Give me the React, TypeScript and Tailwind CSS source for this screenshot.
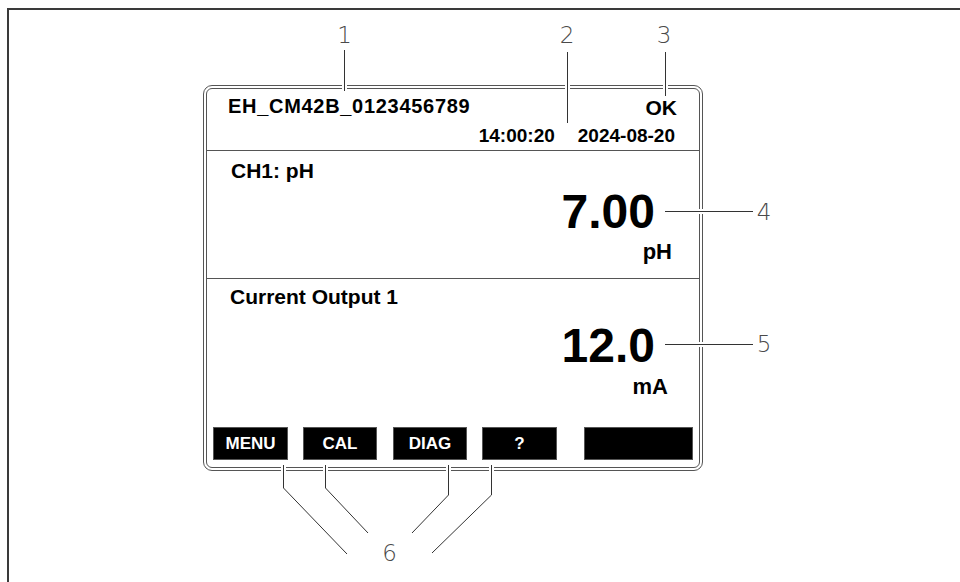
const labelFont = "font-['DejaVu_Sans',sans-serif] font-extralight text-[23px] leading-none text-[#4a4a4a]";

function Callout({ n, x, y }: { n: string; x: number; y: number }) {
  return (
    <div className={`absolute w-[24px] text-center ${labelFont}`} style={{ left: x - 12, top: y }}>
      {n}
    </div>
  );
}

function SoftKey({ label, w, ml }: { label: string; w: string; ml: string }) {
  return (
    <div className={`${w} ${ml} h-[33px] bg-black border border-[#555] flex items-center justify-center text-white font-bold text-[17px] leading-none`}>
      {label}
    </div>
  );
}

export default function App() {
  // callout leader lines: white halo first so the panel border gets a gap
  const lines = [
    'M344.5 50 V91',
    'M567.5 52 V123',
    'M665.5 52 V96',
    'M665 211.5 H753',
    'M665 344.5 H753',
    'M283.5 465 V488 L347 554',
    'M325.5 465 V488 L368 533',
    'M448.5 465 V495 L412 533',
    'M491.5 465 V495 L432 553',
  ];

  return (
    <div className="relative w-[960px] h-[582px] bg-white overflow-hidden pt-[8px] pl-[7px] font-['Liberation_Sans',Arial,sans-serif] text-black">
      <div className="h-[600px] w-[960px] border-l-2 border-t-2 border-[#3a3a3a] pl-[194px] pt-[75px]">
        <div className="w-[500px] rounded-[9px] border border-[#555] p-[2px]">
          <div className="h-[380px] rounded-[6px] border border-[#555] flex flex-col">
            {/* header */}
            <div className="h-[62px] border-b border-[#555] flex flex-col">
              <div className="flex justify-between pt-[7px] pl-[21px] pr-[22px]">
                <span className="text-[20px] leading-none font-bold tracking-[0.7px]">EH_CM42B_0123456789</span>
                <span className="mt-[1px] text-[21px] leading-none font-bold font-['Liberation_Sans_Narrow','Liberation_Sans',sans-serif]">OK</span>
              </div>
              <div className="flex justify-end gap-[23px] mt-[8px] pr-[24px] text-[19px] leading-none font-bold">
                <span>14:00:20</span>
                <span>2024-08-20</span>
              </div>
            </div>

            {/* channel 1 */}
            <div className="h-[128px] border-b border-[#555] flex flex-col">
              <div className="pt-[9px] pl-[24px] text-[21px] leading-none font-bold">CH1: pH</div>
              <div className="mt-[7px] pr-[44px] text-right text-[48px] leading-none font-bold">7.00</div>
              <div className="mt-[5px] pr-[27px] text-right text-[22px] leading-none font-bold">pH</div>
            </div>

            {/* current output */}
            <div className="flex-1 flex flex-col">
              <div className="pt-[7px] pl-[23px] text-[21px] leading-none font-bold">Current Output 1</div>
              <div className="mt-[15px] pr-[44px] text-right text-[48px] leading-none font-bold">12.0</div>
              <div className="mt-[6px] pr-[31px] text-right text-[22px] leading-none font-bold">mA</div>
              <div className="mt-[29px] pl-[6px] flex">
                <SoftKey label="MENU" w="w-[75px]" ml="ml-0" />
                <SoftKey label="CAL" w="w-[74px]" ml="ml-[15px]" />
                <SoftKey label="DIAG" w="w-[74px]" ml="ml-[16px]" />
                <SoftKey label="?" w="w-[75px]" ml="ml-[15px]" />
                <SoftKey label="" w="w-[109px]" ml="ml-[27px]" />
              </div>
            </div>
          </div>
        </div>
      </div>

      <svg className="absolute left-0 top-0 pointer-events-none" width="960" height="582" viewBox="0 0 960 582">
        {lines.map((d) => (
          <path key={'h' + d} d={d} fill="none" stroke="#fff" strokeWidth="5" />
        ))}
        {lines.map((d) => (
          <path key={d} d={d} fill="none" stroke="#333" strokeWidth="1" />
        ))}
      </svg>

      <Callout n="1" x={344.5} y={24} />
      <Callout n="2" x={567} y={24} />
      <Callout n="3" x={664} y={24} />
      <Callout n="4" x={764} y={201} />
      <Callout n="5" x={764} y={333} />
      <Callout n="6" x={389.5} y={542} />
    </div>
  );
}
